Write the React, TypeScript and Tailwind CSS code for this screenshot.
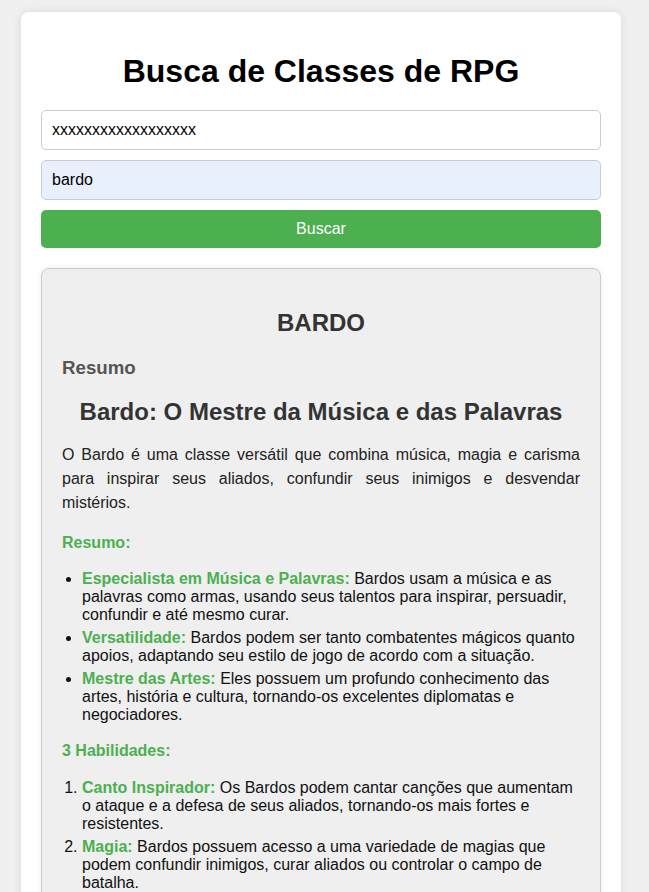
import { useState } from "react";

const resumo = [
  {
    label: "Especialista em Música e Palavras:",
    text: " Bardos usam a música e as palavras como armas, usando seus talentos para inspirar, persuadir, confundir e até mesmo curar.",
  },
  {
    label: "Versatilidade:",
    text: " Bardos podem ser tanto combatentes mágicos quanto apoios, adaptando seu estilo de jogo de acordo com a situação.",
  },
  {
    label: "Mestre das Artes:",
    text: " Eles possuem um profundo conhecimento das artes, história e cultura, tornando-os excelentes diplomatas e negociadores.",
  },
];

const habilidades = [
  {
    label: "Canto Inspirador:",
    text: " Os Bardos podem cantar canções que aumentam o ataque e a defesa de seus aliados, tornando-os mais fortes e resistentes.",
  },
  {
    label: "Magia:",
    text: " Bardos possuem acesso a uma variedade de magias que podem confundir inimigos, curar aliados ou controlar o campo de batalha.",
  },
  {
    label: "Palavras Cortantes:",
    text: " Com sua lábia afiada, os Bardos podem desmoralizar inimigos e abalar sua confiança em combate.",
  },
];

export default function App() {
  const [apiKey, setApiKey] = useState("xxxxxxxxxxxxxxxxxx");
  const [classe, setClasse] = useState("bardo");

  return (
    <div className="min-h-[892px] bg-[#f0f0f0] pt-3 pb-10 font-['Liberation_Sans',Arial,sans-serif] text-base">
      <div className="ml-[21px] w-[600px] rounded-lg bg-white px-5 pb-5 pt-5 shadow-[0_0_10px_rgba(0,0,0,0.1)]">
        <h1 className="mt-[21px] mb-5 text-center text-[32px] font-bold leading-[37px] text-black">
          Busca de Classes de RPG
        </h1>

        <input
          value={apiKey}
          onChange={(e) => setApiKey(e.target.value)}
          className="mb-2.5 block h-10 w-full rounded-[5px] border border-[#ccc] bg-white px-2.5 text-base text-black outline-none"
        />
        <input
          value={classe}
          onChange={(e) => setClasse(e.target.value)}
          className="mb-2.5 block h-10 w-full rounded-[5px] border border-[#ccc] bg-[#e8f0fe] px-2.5 text-base text-black outline-none"
        />
        <button className="block h-[38px] w-full rounded-[5px] bg-[#4caf50] text-base text-white">
          Buscar
        </button>

        <div className="mt-5 rounded-lg border border-[#ccc] bg-[#efefef] px-5 pt-5 pb-4 shadow-[0_0_6px_rgba(0,0,0,0.08)]">
          <h2 className="mt-5 mb-5 text-center text-2xl font-bold leading-7 text-[#333]">BARDO</h2>
          <h3 className="mb-[19px] text-[18.7px] font-bold leading-[22px] text-[#555]">Resumo</h3>
          <h2 className="mb-[17px] text-center text-2xl font-bold leading-7 text-[#333]">
            Bardo: O Mestre da Música e das Palavras
          </h2>
          <p className="mb-[19px] text-justify leading-6 text-[#222]">
            O Bardo é uma classe versátil que combina música, magia e carisma para inspirar seus aliados, confundir seus
            inimigos e desvendar mistérios.
          </p>

          <p className="mb-[18px] font-bold leading-[18px] text-[#4caf50]">Resumo:</p>
          <ul className="mb-[18px] list-disc pl-5 leading-[18px] text-[#111]">
            {resumo.map((item) => (
              <li key={item.label} className="mb-[5px]">
                <strong className="text-[#4caf50]">{item.label}</strong>
                {item.text}
              </li>
            ))}
          </ul>

          <p className="mb-[19px] font-bold leading-[18px] text-[#4caf50]">3 Habilidades:</p>
          <ol className="mb-4 list-decimal pl-5 leading-[18px] text-[#111]">
            {habilidades.map((item) => (
              <li key={item.label} className="mb-[5px]">
                <strong className="text-[#4caf50]">{item.label}</strong>
                {item.text}
              </li>
            ))}
          </ol>
        </div>
      </div>
    </div>
  );
}
